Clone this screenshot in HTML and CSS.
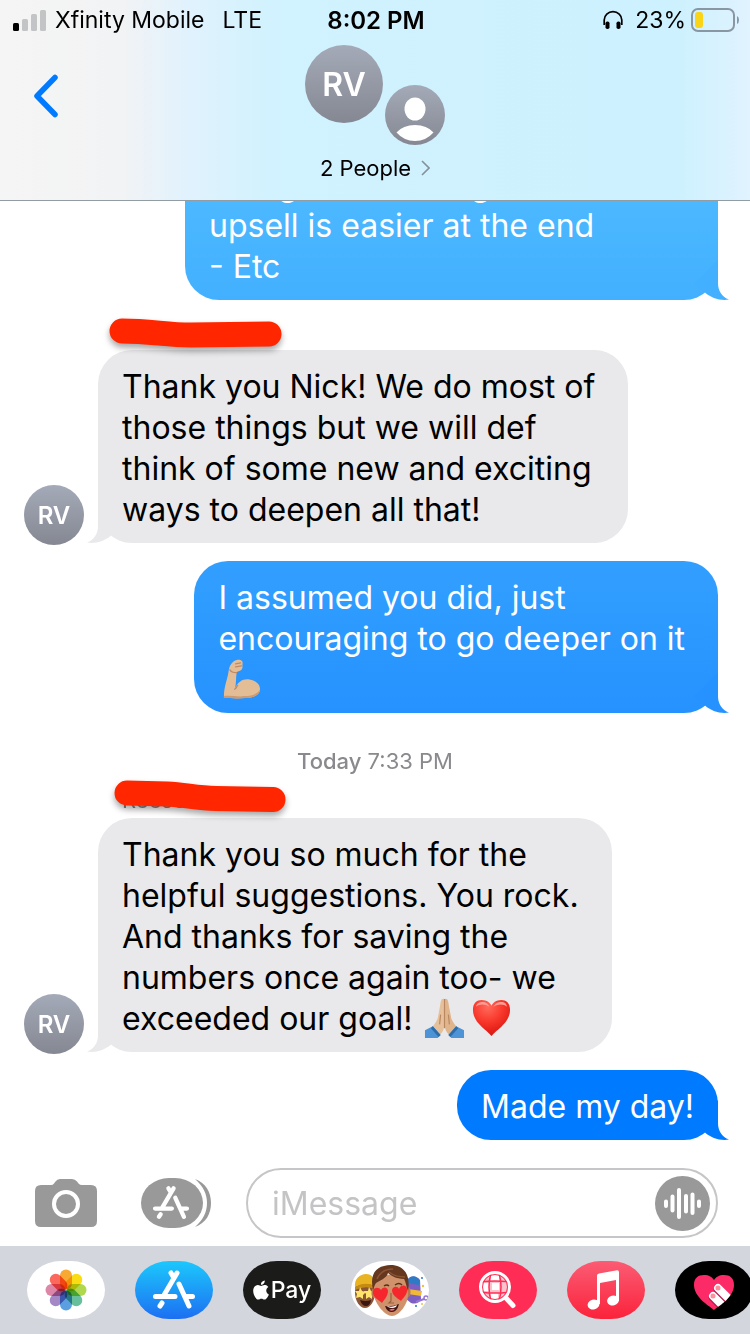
FILE: index.html
```html
<!DOCTYPE html>
<html lang="en">
<head>
    <meta charset="UTF-8">
    <meta name="viewport" content="width=device-width, initial-scale=1.0">
    <title>Messages</title>
    <link rel="stylesheet" href="styles.css">
</head>
<body>
    <!-- Shared shapes -->
    <svg class="defs" aria-hidden="true">
        <symbol id="tail" viewBox="0 0 36 40">
            <path d="M24 0V23C24 31 28 37 35 39.6C26 41 17 38 11 32.5L0 24Z"/>
        </symbol>
        <symbol id="store" viewBox="0 0 78 58">
            <path d="M42 12L28.500 35M36 12L39 17M44 23L54 45M20.500 35.500H40M50 35.500H57.500M27 42L25 45" fill="none" stroke="#fff" stroke-width="5" stroke-linecap="round"/>
        </symbol>
    </svg>

    <header class="header">
        <div class="status">
            <div class="status-left">
                <svg width="33" height="22" viewBox="0 0 33 22" aria-hidden="true">
                    <rect x="0" y="14" width="6" height="8" rx="1.500" fill="#000"/>
                    <rect x="9" y="10" width="6" height="12" rx="1.500" fill="#c3c4c5"/>
                    <rect x="18" y="5" width="6" height="17" rx="1.500" fill="#c3c4c5"/>
                    <rect x="27" y="1" width="6" height="21" rx="1.500" fill="#c3c4c5"/>
                </svg>
                <span class="carrier">Xfinity Mobile</span>
                <span>LTE</span>
            </div>
            <div class="time">8:02 PM</div>
            <div class="status-right">
                <svg width="20" height="20" viewBox="0 0 20 20" aria-hidden="true">
                    <path d="M1.200 15V10A8.800 8.300 0 0 1 18.800 10V15" fill="none" stroke="#000" stroke-width="1.700"/>
                    <rect x="2.500" y="11.500" width="4" height="7.500" rx="1.800"/>
                    <rect x="13.500" y="11.500" width="4" height="7.500" rx="1.800"/>
                </svg>
                <span class="percent">23%</span>
                <svg width="48" height="24" viewBox="0 0 48 24" aria-hidden="true">
                    <rect x="1" y="1" width="42" height="22" rx="6" fill="none" stroke="#8997a3" stroke-width="2"/>
                    <rect x="4" y="4" width="8" height="16" rx="3" fill="#fad417"/>
                    <path d="M46 8Q48 9 48 12T46 16Z" fill="#8997a3"/>
                </svg>
            </div>
        </div>
        <div class="nav">
            <button class="back" aria-label="Back">
                <svg width="26" height="44" viewBox="0 0 26 44">
                    <path d="M23 3.500L5 22L23 40.500" fill="none" stroke="#007aff" stroke-width="5.500" stroke-linecap="round" stroke-linejoin="round"/>
                </svg>
            </button>
            <div class="people">
                <div class="faces">
                    <div class="avatar avatar-large">RV</div>
                    <svg class="avatar-person" width="60" height="60" viewBox="0 0 60 60" aria-hidden="true">
                        <ellipse cx="30" cy="24" rx="10.500" ry="11.500" fill="#fff"/>
                        <path d="M11.500 47.500Q18 40 30 40T48.500 47.500Q41 56 30 56T11.500 47.500Z" fill="#fff"/>
                    </svg>
                </div>
                <a class="people-link" href="#">2 People
                    <svg width="9" height="16" viewBox="0 0 9 16" aria-hidden="true"><path d="M1 1L8 8L1 15" fill="none" stroke="#84919a" stroke-width="1.600"/></svg>
                </a>
            </div>
        </div>
    </header>

    <main class="chat">
        <div class="row sent">
            <div class="bubble multi wide blue-light">
                Doing more selling<br>
                upsell is easier at the end<br>
                - Etc
                <svg class="tail" aria-hidden="true"><use href="#tail"/></svg>
            </div>
        </div>

        <div class="row received">
            <div class="avatar">RV</div>
            <div class="stack">
                <div class="sender">
                    <svg class="marker" viewBox="0 0 190 54" aria-hidden="true"><path d="M16 23C45 23 60 27 85 27L163 26"/></svg>
                </div>
                <div class="bubble multi">
                    Thank you Nick! We do most of<br>
                    those things but we will def<br>
                    think of some new and exciting<br>
                    ways to deepen all that!
                    <svg class="tail" aria-hidden="true"><use href="#tail"/></svg>
                </div>
            </div>
        </div>

        <div class="row sent">
            <div class="bubble multi blue-mid">
                I assumed you did, just<br>
                encouraging to go deeper on it<br>
                <svg class="emoji" viewBox="0 0 42 42" role="img" aria-label="Flexed arm">
                    <path d="M3 38C3 28 7 20 8 11C9 6 12 2 16 1C20 0 23 2 22 5L22 9C21 13 17 12 16 14C15 20 16 25 14 31C17 23 23 20 29 21C36 22 40 26 40 31C40 37 33 40 25 40C17 41 8 40 3 40Z" fill="#e3bd96"/>
                    <path d="M3 38C10 37 17 39 24 38C32 38 37 36 40 31C40 37 33 40 25 40C17 41 8 40 3 40Z" fill="#cf9a70"/>
                    <path d="M14 31C16 30 16 28 17 27M16 14C12 14 10 13 9 11M15 5L20 4M15 8L21 7" fill="none" stroke="#c18a66" stroke-width="1.400" stroke-linecap="round"/>
                </svg>
                <svg class="tail" aria-hidden="true"><use href="#tail"/></svg>
            </div>
        </div>

        <div class="stamp"><b>Today</b> 7:33 PM</div>

        <div class="row received">
            <div class="avatar">RV</div>
            <div class="stack">
                <div class="sender">Reese
                    <svg class="marker" viewBox="0 0 190 54" aria-hidden="true"><path d="M21 17L61 18C80 19 90 22 110 22.500L167 23.500"/></svg>
                </div>
                <div class="bubble multi">
                    Thank you so much for the<br>
                    helpful suggestions. You rock.<br>
                    And thanks for saving the<br>
                    numbers once again too- we<br>
                    exceeded our goal!
                    <svg class="emoji" viewBox="0 0 42 42" role="img" aria-label="Folded hands">
                        <path d="M20.500 1C18 0 17 3 16.500 8L14 21C12 26 9 29 7 31L14 39C18 37 20 34 20.500 30Z" fill="#e6c09a"/>
                        <path d="M21.500 1C24 0 25 3 25.500 8L28 21C30 26 33 29 35 31L28 39C24 37 22 34 21.500 30Z" fill="#e0b58c"/>
                        <path d="M21 1V31M17 17L16 27M25 17L26 27" fill="none" stroke="#b98762" stroke-width="1.200"/>
                        <path d="M1 33L9 29L17 38L14 41H1ZM41 33L33 29L25 38L28 41H41Z" fill="#4c94d5"/>
                        <path d="M9 29L17 38L15 40L7 31ZM33 29L25 38L27 40L35 31Z" fill="#2f6da8"/>
                    </svg><svg class="emoji" viewBox="0 0 42 42" role="img" aria-label="Red heart">
                        <defs>
                            <radialGradient id="love" cx="0.400" cy="0.200" r="0.800">
                                <stop offset="0" stop-color="#ff6a5c"/>
                                <stop offset="0.500" stop-color="#f9382c"/>
                                <stop offset="1" stop-color="#d8150f"/>
                            </radialGradient>
                        </defs>
                        <path d="M21 39C17 33 2 26 2 12C2 5 6 2 11 2C16 2 20 5 21 8C22 5 26 2 31 2C36 2 40 5 40 12C40 26 25 33 21 39Z" fill="url(#love)"/>
                        <path d="M5 9C6 5 9 4 12 4C15 4 18 6 19 9C14 6 9 6 5 9ZM23 9C25 5 28 4 31 4C34 4 36 5 37 9C33 6 28 6 23 9Z" fill="#ff9d94"/>
                    </svg>
                    <svg class="tail" aria-hidden="true"><use href="#tail"/></svg>
                </div>
            </div>
        </div>

        <div class="row sent">
            <div class="bubble blue">Made my day!
                <svg class="tail" aria-hidden="true"><use href="#tail"/></svg>
            </div>
        </div>
    </main>

    <form class="composer">
        <button type="button" class="camera" aria-label="Camera">
            <svg width="62" height="48" viewBox="0 0 62 48">
                <path d="M6 6H16Q18 6 19 4.500L20.500 2.500Q22 0 25 0H37Q40 0 42 2.500L43.500 4.500Q45 6 47 6H56Q62 6 62 12V42Q62 48 56 48H6Q0 48 0 42V12Q0 6 6 6Z" fill="#999"/>
                <circle cx="31" cy="25" r="12" fill="none" stroke="#fff" stroke-width="4"/>
            </svg>
        </button>
        <button type="button" aria-label="Apps">
            <svg width="70" height="50" viewBox="0 0 70 50">
                <path d="M54 1C65 5 70 14 70 25S65 45 54 49C62 42 66 34 66 25S62 8 54 1Z" fill="#999"/>
                <rect width="62" height="50" rx="28" ry="25" fill="#999"/>
                <use href="#store" x="-4" y="0" width="68" height="50"/>
            </svg>
        </button>
        <div class="field">
            <input type="text" aria-label="Message" placeholder="iMessage">
            <button type="button" class="audio" aria-label="Record audio">
                <svg width="55" height="55" viewBox="0 0 55 55">
                    <path d="M11 25.500V30M17.500 20.500V34.500M24 14V41M31 20V35.500M37.500 18.500V37M44 25.500V30" fill="none" stroke="#fff" stroke-width="4" stroke-linecap="round"/>
                </svg>
            </button>
        </div>
    </form>

    <nav class="apps" aria-label="iMessage apps">
        <button class="app white" aria-label="Photos">
            <svg viewBox="0 0 78 58">
                <g class="petals" transform="translate(39 29)">
                    <rect x="-6" y="-20.500" width="12" height="20" rx="6" fill="#f7a933"/>
                    <rect x="-6" y="-20.500" width="12" height="20" rx="6" fill="#f9dc13" transform="rotate(45)"/>
                    <rect x="-6" y="-20.500" width="12" height="20" rx="6" fill="#b0d84f" transform="rotate(90)"/>
                    <rect x="-6" y="-20.500" width="12" height="20" rx="6" fill="#67bf9b" transform="rotate(135)"/>
                    <rect x="-6" y="-20.500" width="12" height="20" rx="6" fill="#5b9fe0" transform="rotate(180)"/>
                    <rect x="-6" y="-20.500" width="12" height="20" rx="6" fill="#a488c5" transform="rotate(225)"/>
                    <rect x="-6" y="-20.500" width="12" height="20" rx="6" fill="#dc86a8" transform="rotate(270)"/>
                    <rect x="-6" y="-20.500" width="12" height="20" rx="6" fill="#fa695c" transform="rotate(315)"/>
                </g>
            </svg>
        </button>
        <button class="app store" aria-label="App Store">
            <svg viewBox="0 0 78 58"><use href="#store"/></svg>
        </button>
        <button class="app pay" aria-label="Apple Pay">
            <svg class="apple" viewBox="2 0 20 24">
                <path fill="#fff" d="M12.152 6.896c-.948 0-2.415-1.078-3.960-1.040-2.040.027-3.910 1.183-4.961 3.014-2.117 3.675-.546 9.103 1.519 12.090 1.013 1.454 2.208 3.090 3.792 3.039 1.520-.065 2.090-.987 3.935-.987 1.831 0 2.350.987 3.960.948 1.637-.026 2.676-1.480 3.676-2.948 1.156-1.688 1.636-3.325 1.662-3.415-.039-.013-3.182-1.221-3.220-4.857-.026-3.040 2.480-4.494 2.597-4.559-1.429-2.090-3.623-2.324-4.390-2.376-2-.156-3.675 1.090-4.610 1.090zM15.530 3.830c.843-1.012 1.400-2.427 1.245-3.830-1.207.052-2.662.805-3.532 1.818-.780.896-1.454 2.338-1.273 3.714 1.338.104 2.715-.688 3.559-1.701"/>
            </svg>
            <span>Pay</span>
        </button>
        <button class="app white" aria-label="Memoji">
            <svg viewBox="0 0 78 58">
                <ellipse cx="14" cy="31" rx="10" ry="16" fill="#8a5535"/>
                <path d="M4 26C3 18 9 13 15 13S24 17 24 25Q14 21 4 26Z" fill="#e8b423"/>
                <path d="M4 26Q14 20 24 25V28Q14 24 4 29Z" fill="#c58a12"/>
                <path d="M9 26L11 30L15 31L12 34L12 38L9 36L5 37L6 33L4 30L8 30ZM18 26L20 30L24 31L21 34L21 38L18 36L15 38L15 33L13 30L17 30Z" fill="#ffe36b"/>
                <path d="M9 39Q15 41 20 39Q19 45 15 45T9 39Z" fill="#3b1610"/>
                <path d="M57 18C60 14 66 15 69 19L70 38Q67 44 60 42L55 38Z" fill="#7d5fc4"/>
                <path d="M57 19C59 14 66 14 69 20L68 24L57 22Z" fill="#2e7bc5"/>
                <path d="M57 28L71 30L70 35L57 33Z" fill="#f1b93a"/>
                <circle cx="75" cy="37" r="2" fill="none" stroke="#9675d3" stroke-width="1.500"/>
                <path d="M65 41L73 38" stroke="#9675d3" stroke-width="2"/>
                <circle cx="71" cy="17" r="1" fill="#2d72d8"/><circle cx="72" cy="25" r="1.200" fill="#efc23e"/><circle cx="65" cy="45" r="1" fill="#2d72d8"/><circle cx="71" cy="43" r="1" fill="#efc23e"/>
                <ellipse cx="23" cy="32" rx="2.500" ry="5" fill="#b87850"/><ellipse cx="57" cy="31" rx="2.500" ry="5" fill="#b87850"/>
                <path d="M23 20Q39 7 56 20L57 34C57 43 48 55 41 55S24 43 23 34Z" fill="#d0926a"/>
                <path d="M22 29C19 16 23 7 33 5C43 2 53 6 56 14C58 19 58 25 57 30C55 25 55 21 53 18C45 18 39 14 37 12C36 17 28 20 25 22C23 25 23 27 22 29Z" fill="#65371f"/>
                <path d="M26 18C29 11 35 8 42 8M38 11C43 15 49 16 54 16" fill="none" stroke="#8b5332" stroke-width="1.500"/>
                <path d="M33 25Q36 23 38 25M44 24Q48 21 51 24" fill="none" stroke="#54301c" stroke-width="1.500"/>
                <path d="M31 42C28 39 21 36 22 30C23 26 28 26 30 29C32 25 37 26 37 30C37 35 33 39 31 42ZM50 40C46 37 41 34 41 29C42 25 47 25 48 28C50 23 56 24 56 28C57 33 52 37 50 40Z" fill="#f5272c"/>
                <path d="M40 32V40L38 42H43" fill="none" stroke="#99603e" stroke-width="1.200"/>
                <path d="M34 45Q41 46 48 43Q46 51 41 51T34 45Z" fill="#431510"/><path d="M36 45Q41 47 46 44L45 46Q41 48 37 46Z" fill="#fff"/><path d="M38 49Q41 47 44 48Q42 51 38 49Z" fill="#ef7676"/>
            </svg>
        </button>
        <button class="app pink" aria-label="Images">
            <svg viewBox="0 0 78 58">
                <clipPath id="lens"><circle cx="36" cy="26" r="13"/></clipPath>
                <g clip-path="url(#lens)">
                    <path d="M22 12H50V40H22Z" fill="#ffc1cb"/>
                    <path d="M32 12H40V20H32ZM22 22H30V30H22ZM33 22H40V29H33ZM32 32H39V40H32Z" fill="#fff"/>
                    <path d="M32 12Q28 26 32 40M40 12Q44 26 40 40M22 21Q36 19 50 21M22 31Q36 33 50 31" fill="none" stroke="#ff2d55" stroke-width="1.500"/>
                </g>
                <circle cx="36" cy="26" r="14.500" fill="none" stroke="#fff" stroke-width="3"/>
                <path d="M47 37L54 44.500" stroke="#fff" stroke-width="5" stroke-linecap="round"/>
                <circle cx="36" cy="26" r="12.500" fill="none" stroke="#ff2d55"/>
            </svg>
        </button>
        <button class="app music" aria-label="Music">
            <svg viewBox="0 0 78 58">
                <path d="M30 14.500Q30 13 32 12.600L50 9.200Q52 9 52 11V40H49V19L33 22V43H30Z" fill="#fff"/>
                <ellipse cx="26.500" cy="43.500" rx="6" ry="5" fill="#fff" transform="rotate(-15 26.500 43.500)"/>
                <ellipse cx="46" cy="39.500" rx="6" ry="5" fill="#fff" transform="rotate(-15 46 39.500)"/>
            </svg>
        </button>
        <button class="app black" aria-label="Digital Touch">
            <svg viewBox="0 0 78 58">
                <clipPath id="touch"><path d="M39 49C33 44 19 36 19 24C19 17 23 14 29 14C34 14 37 16 39 19C41 16 44 14 49 14C55 14 59 17 59 24C59 36 45 44 39 49Z"/></clipPath>
                <g clip-path="url(#touch)">
                    <rect x="18" y="12" width="42" height="40" fill="#fd2a68"/>
                    <path d="M43 28L60 45M38 36L54 52" stroke="#b81850" stroke-width="9" stroke-linecap="round"/>
                    <path d="M43 27L60 44M38 35L54 51" stroke="#fff" stroke-width="8" stroke-linecap="round"/>
                    <circle cx="43" cy="27" r="2.500" fill="#ff8f9d"/><circle cx="38" cy="35" r="2.500" fill="#ff8f9d"/>
                </g>
            </svg>
        </button>
    </nav>
</body>
</html>
```
FILE: styles.css
```css
* {
    box-sizing: border-box;
}
body {
    margin: 0;
    height: 100vh;
    display: flex;
    flex-direction: column;
    overflow: hidden;
    background-color: #fff;
    color: #000;
    font-family: Inter, "Liberation Sans", sans-serif;
    font-size: 32px;
}
button {
    display: block;
    padding: 0;
    border: none;
    background: none;
    cursor: pointer;
    font-family: inherit;
}
svg {
    display: block;
    flex-shrink: 0;
}
.defs {
    position: absolute;
    width: 0;
    height: 0;
}

/* Header */
.header {
    flex-shrink: 0;
    background: linear-gradient(to right, #f5f5f5 0%, #f2f3f4 16%, #e1f2fd 25%, #d1f2fe 36%, #cdf1fe 90%, #d8f2fe 96%, #e0f3fe 100%);
    border-bottom: 1px solid #929da3;
}
.status {
    display: grid;
    grid-template-columns: 1fr auto 1fr;
    align-items: center;
    height: 40px;
    padding: 0 11px 0 13px;
    font-size: 23px;
}
.status-left, .status-right {
    display: flex;
    align-items: center;
}
.status-right {
    justify-content: flex-end;
}
.carrier {
    margin: 0 18px 0 9px;
}
.percent {
    margin: 0 5px 0 12px;
}
.time {
    font-size: 24px;
    font-weight: 600;
}
.nav {
    display: grid;
    grid-template-columns: 1fr auto 1fr;
    align-items: start;
    padding: 5px 32px 18px;
}
.back {
    justify-self: start;
    margin-top: 29px;
}
.people {
    display: flex;
    flex-direction: column;
    align-items: center;
    gap: 9px;
}
.faces {
    display: flex;
    gap: 2px;
    height: 100px;
}
.avatar, .avatar-person {
    flex-shrink: 0;
    width: 60px;
    height: 60px;
    border-radius: 50%;
    background: linear-gradient(#a4aab8, #858892);
}
.avatar {
    display: flex;
    align-items: center;
    justify-content: center;
    color: #fff;
    font-size: 24px;
    font-weight: 600;
}
.avatar-large {
    width: 78px;
    height: 78px;
    font-size: 32px;
}
.avatar-person {
    align-self: flex-end;
}
.people-link {
    display: flex;
    align-items: center;
    gap: 10px;
    color: #000;
    font-size: 22px;
    line-height: 28px;
    text-decoration: none;
}

/* Conversation */
.chat {
    flex: 1;
    min-height: 0;
    display: flex;
    flex-direction: column;
    justify-content: flex-end;
    gap: 18px;
    padding: 0 32px 28px 24px;
    overflow: hidden;
}
.row {
    display: flex;
    flex-shrink: 0;
    align-items: flex-end;
}
.sent {
    justify-content: flex-end;
}
.received {
    gap: 14px;
}
.received .avatar {
    margin-bottom: -2px;
}
.stack {
    display: flex;
    flex-direction: column;
    align-items: flex-start;
}
.sender {
    position: relative;
    height: 32px;
    padding-left: 24px;
    color: #858589;
    font-size: 22px;
    line-height: 28px;
}
.marker {
    position: absolute;
    top: -10px;
    left: 8px;
    z-index: 1;
    width: 190px;
    height: 54px;
    fill: none;
    stroke: #ff2600;
    stroke-width: 25px;
    stroke-linecap: round;
    filter: drop-shadow(0 4px 3px rgba(0,0,0,0.35));
}
.bubble {
    position: relative;
    max-width: 533px;
    padding: 16px 24px 13px;
    border-radius: 34px;
    background: #e9e9eb;
    fill: #e9e9eb;
    line-height: 41px;
}
.multi {
    padding-right: 33px;
}
.wide {
    width: 100%;
}
.sent .bubble {
    color: #fff;
}
.blue-light {
    background: linear-gradient(#50bcff, #43b0ff);
    fill: #43b0ff;
}
.blue-mid {
    background: linear-gradient(#329fff, #2592ff);
    fill: #2592ff;
}
.sent .blue {
    background: #007aff;
    fill: #007aff;
}
.tail {
    position: absolute;
    right: -12px;
    bottom: 0;
    width: 36px;
    height: 40px;
}
.received .tail {
    right: auto;
    left: -12px;
    transform: scaleX(-1);
}
.emoji {
    display: inline-block;
    width: 41px;
    height: 41px;
    margin: 0 3px;
    vertical-align: top;
}
.stamp {
    flex-shrink: 0;
    margin-bottom: -7px;
    padding: 16px 0 0 8px;
    color: #8a8a8e;
    font-size: 22px;
    line-height: 28px;
    text-align: center;
}
.stamp b {
    font-weight: 500;
}

/* Message box */
.composer {
    flex-shrink: 0;
    display: flex;
    align-items: center;
    gap: 35px;
    padding: 0 32px 8px 35px;
}
.camera {
    width: 71px;
}
.field {
    flex: 1;
    min-width: 0;
    display: flex;
    align-items: center;
    height: 70px;
    padding: 0 6px 0 24px;
    border: 2px solid #c6c6c8;
    border-radius: 35px;
}
.field input {
    flex: 1;
    min-width: 0;
    padding: 0;
    border: none;
    outline: none;
    background: none;
    font: inherit;
}
.field input::placeholder {
    color: #c4c4c6;
}
.audio {
    border-radius: 50%;
    background-color: #999;
}

/* App drawer */
.apps {
    flex-shrink: 0;
    display: flex;
    gap: 30px;
    padding: 15px 0 15px 27px;
    overflow: hidden;
    background-color: #d4d6de;
}
.app {
    flex-shrink: 0;
    width: 78px;
    height: 58px;
    border-radius: 34px / 29px;
    overflow: hidden;
}
.white {
    background-color: #fff;
}
.petals rect {
    mix-blend-mode: multiply;
}
.store {
    background: linear-gradient(#1cc8fc, #1d6ff2);
}
.pay {
    display: flex;
    align-items: center;
    justify-content: center;
    gap: 2px;
    background-color: #1b1b19;
    color: #fff;
    font-size: 23px;
    font-weight: 500;
}
.apple {
    width: 16px;
    height: 20px;
}
.pink {
    background-color: #ff2d55;
}
.music {
    background: linear-gradient(#fb5c74, #fa233b);
}
.black {
    background-color: #000;
}
```
